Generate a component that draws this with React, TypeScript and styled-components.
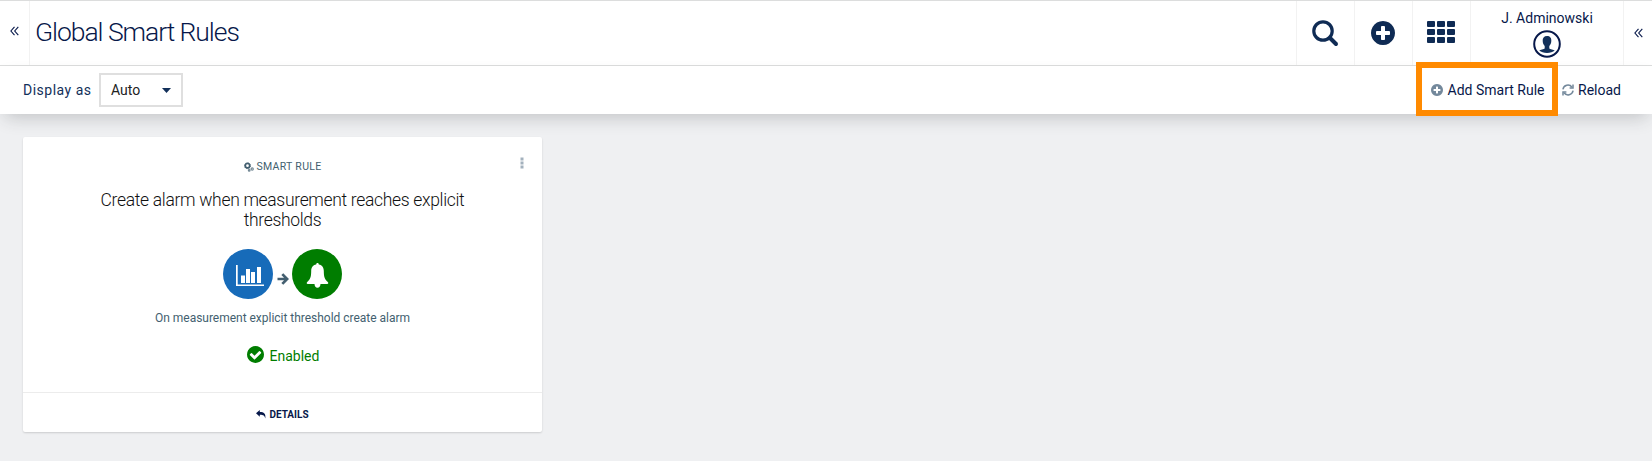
import React from 'react';
import styled, { createGlobalStyle } from 'styled-components';

const Global = createGlobalStyle`
  *{box-sizing:border-box}
  body{margin:0;background:#eff0f2;font-family:Roboto,"Liberation Sans",sans-serif;color:#07184a;font-size:14px}
  svg{display:block;flex:none}
`;
const Page = styled.div`height:461px;overflow:hidden;`;
const Header = styled.header`height:66px;display:flex;background:#fff;border-top:1px solid #dcdddd;border-bottom:1px solid #dcdddd;`;
const Toggle = styled.button<{ $side: 'left' | 'right' }>`
  width:${p => (p.$side === 'left' ? 30 : 29)}px;border:0;background:none;color:inherit;display:flex;align-items:center;justify-content:center;
  padding:${p => (p.$side === 'left' ? '0 0 4px 0' : '0')};
  ${p => (p.$side === 'left' ? 'border-right:1px solid #f2f2f2;' : 'border-left:1px solid #f2f2f2;')}
`;
const Title = styled.h1`margin:0 auto 0 5px;font-size:26.5px;font-weight:300;line-height:62px;letter-spacing:-1.05px;white-space:nowrap;`;
const Tool = styled.button<{ $bottom?: number }>`width:58px;padding:0 1px ${p => p.$bottom ?? 0}px 0;border:0;border-left:1px solid #f2f2f2;background:none;color:#0f2b54;display:flex;align-items:center;justify-content:center;`;
const User = styled.div`width:153px;border-left:1px solid #f2f2f2;display:flex;flex-direction:column;align-items:center;padding-top:8px;line-height:18px;font-size:14px;svg{margin-top:2.500px}`;
const Toolbar = styled.div`height:48px;background:#fff;display:flex;align-items:center;padding-left:23px;box-shadow:0 8px 18px -5px rgba(40,45,50,.24);`;
const Label = styled.label`font-size:14px;letter-spacing:.5px;color:#12305a;width:76px;white-space:nowrap;`;
const Select = styled.div`width:84px;height:34px;border:2px solid #dfdfdf;display:flex;align-items:center;justify-content:space-between;padding:0 10px 0 10px;color:#222;font-size:14px;`;
const Actions = styled.div`margin-left:auto;display:flex;align-items:center;`;
const Highlight = styled.div`width:142px;height:54px;margin-bottom:2px;border:6px solid #ff8a00;display:flex;align-items:center;justify-content:center;position:relative;padding:2px 0 0 1px;`;
const Action = styled.button`border:0;background:none;padding:0;color:#07184a;font:14px Roboto,sans-serif;display:flex;align-items:center;gap:5px;white-space:nowrap;svg{color:#73889b}`;
const Reload = styled(Action)`margin:0 31px 0 4px;gap:4px;`;
const Card = styled.article`margin:23px 0 0 23px;width:519px;height:295px;background:#fff;border-radius:2px;box-shadow:0 1px 2px rgba(0,0,0,.15);display:flex;flex-direction:column;align-items:center;position:relative;`;
const Kind = styled.div`margin-top:22px;height:14px;padding-top:1px;display:flex;align-items:center;gap:3px;color:#435f70;font-size:10.5px;letter-spacing:.3px;`;
const Menu = styled.button`position:absolute;right:17px;top:20px;width:5px;padding:0;border:0;background:none;color:#a3b1bd;`;
const Name = styled.h2`margin:17px 0 0;width:400px;text-align:center;font-size:17.5px;line-height:20px;font-weight:300;letter-spacing:-.32px;color:#111;`;
const Flow = styled.div`margin-top:19px;display:flex;align-items:center;gap:3.500px;color:#435f70;`;
const Step = styled.span`padding-top:10px;`;
const Circle = styled.div<{ $color: string; $left?: number }>`width:50px;height:50px;border-radius:50%;padding:3px 0 0 ${p => p.$left ?? 0}px;background:${p => p.$color};color:#fff;display:flex;align-items:center;justify-content:center;`;
const Description = styled.p`margin:11px 0 0;font-size:12px;line-height:16px;letter-spacing:-.02px;color:#435f70;`;
const Status = styled.div`margin-top:20px;height:20px;padding-left:1px;display:flex;align-items:center;gap:6px;color:#007d00;font-size:14px;svg{margin-bottom:4px}`;
const Details = styled.button`margin-top:auto;width:100%;height:40px;border:0;border-top:1px solid #ececec;background:none;display:flex;align-items:center;justify-content:center;gap:3px;color:#07184a;font:700 10px Roboto,sans-serif;padding:3px 0 0;`;

type IconProps = { size: number };
const disc = 'M1664 896q0 209-103 385.5t-279.5 279.5-385.5 103-385.5-103-279.5-279.5-103-385.5 103-385.5 279.5-279.5 385.5-103 385.5 103 279.5 279.5 103 385.5z';
const Chevrons = () => <svg width="9" height="10" viewBox="0 0 9 10" fill="none" stroke="currentColor" strokeWidth="1.1"><path d="M4.5.8.9 5l3.6 4.2M8.3.8 4.7 5l3.6 4.2" /></svg>;
const Search = () => <svg width="28" height="28" viewBox="0 0 28 28" fill="none" stroke="currentColor"><circle cx="12" cy="12" r="9.2" strokeWidth="3.2" /><path d="m19 19 6 6" strokeWidth="4" strokeLinecap="round" /></svg>;
const Plus = ({ size }: IconProps) => <svg width={size} height={size} viewBox="128 128 1536 1536" fill="currentColor"><path fillRule="evenodd" d={disc + 'M1344 960v-128q0-26-19-45t-45-19h-256v-256q0-26-19-45t-45-19h-128q-26 0-45 19t-19 45v256h-256q-26 0-45 19t-19 45v128q0 26 19 45t45 19h256v256q0 26 19 45t45 19h128q26 0 45-19t19-45v-256h256q26 0 45-19t19-45z'} /></svg>;
const Check = () => <svg width="17" height="17" viewBox="128 128 1536 1536" fill="currentColor"><path fillRule="evenodd" d={disc + 'M1412 734q0-28-18-46l-91-90q-19-19-45-19t-45 19l-408 407-226-226q-19-19-45-19t-45 19l-91 90q-18 18-18 46 0 27 18 45l362 362q19 19 45 19 27 0 46-19l543-543q18-18 18-45z'} /></svg>;
const Grid = () => <svg width="28" height="22" viewBox="0 0 28 22" fill="currentColor">{[0, 8, 16].map(y => [0, 10, 20].map(x => <rect key={`${x}-${y}`} x={x} y={y} width="8" height="6" rx="1" />))}</svg>;
const Avatar = () => <svg width="28" height="28" viewBox="0 0 28 28"><circle cx="14" cy="14" r="12.8" fill="none" stroke="#07184a" strokeWidth="2" /><path fill="#12305a" d="M14 6c-3 0-4.6 2-4.3 5 .1 2.5 1 3.9 2 5v2.2c-.4 1.2-4.700 1.2-5.400 2.3 1.800 1.700 4.500 2.400 7.700 2.400s5.900-.7 7.700-2.400c-.7-1.100-5-1.100-5.400-2.300V16c1-1.100 1.900-2.500 2-5C18.600 8 17 6 14 6Z" /></svg>;
const Refresh = () => <svg width="12" height="12" viewBox="0 0 12 12" fill="none" stroke="currentColor" strokeWidth="1.5"><path d="M.9 5.300A5.100 5.100 0 0 1 10 3.200M11.100 6.700A5.100 5.100 0 0 1 2 8.800" /><path d="M11 .6V4H7.600M1 11.400V8h3.400" /></svg>;
const Gears = () => <svg width="10" height="10" viewBox="0 0 10 10" fill="none" stroke="currentColor"><circle cx="3.500" cy="3.700" r="2.200" strokeWidth="1.700" /><circle cx="3.500" cy="3.700" r="3" strokeWidth="1" strokeDasharray="1.200 1.100" /><circle cx="8.200" cy="7" r="1.100" strokeWidth="1.200" opacity=".75" /><circle cx="5.200" cy="8.400" r=".8" strokeWidth="1.200" opacity=".75" /></svg>;
const Chart = () => <svg width="28" height="22" viewBox="0 0 28 22" fill="currentColor"><path d="M0 0h1.700v19.500H28V21H0zM5 10.500h4V18H5zM10 4h4v14h-4zM15 7h4v11h-4zM21 2h4v16h-4z" /></svg>;
const Bell = () => <svg width="23" height="25" viewBox="0 0 23 25" fill="currentColor"><path d="M11.500 0c.9 0 1.300.6 1.300 1.600 3.600.7 5 3.200 5 6.500 0 6 1 8.500 4 11 .9.900.6 1.900-.6 1.900H1.800c-1.200 0-1.500-1-.6-1.900 3-2.500 4-5 4-11 0-3.300 1.400-5.800 5-6.500 0-1 .4-1.600 1.300-1.600ZM8.500 21h6c-.2 2.500-1.200 3.700-3 3.700s-2.800-1.200-3-3.700Z" /></svg>;
const Arrow = () => <svg width="12" height="12" viewBox="0 0 12 12" fill="none" stroke="currentColor" strokeWidth="2.700"><path d="M.5 6h9.500M5.300 1.100l4.900 4.900-4.900 4.900" /></svg>;
const Reply = () => <svg width="10" height="9" viewBox="0 0 10 9" fill="currentColor"><path d="M0 3.300 3.800 0v2C8 2 10 3.700 9.300 8.600 8.800 5.700 7.500 4.700 3.800 4.700v2Z" /></svg>;

export default function App() {
  return <Page><Global />
    <Header>
      <Toggle $side="left" aria-label="Navigator"><Chevrons /></Toggle>
      <Title>Global Smart Rules</Title>
      <Tool aria-label="Search"><Search /></Tool><Tool aria-label="Add"><Plus size={24} /></Tool><Tool $bottom={2} aria-label="Apps"><Grid /></Tool>
      <User>J. Adminowski<Avatar /></User>
      <Toggle $side="right" aria-label="Drawer"><Chevrons /></Toggle>
    </Header>
    <Toolbar>
      <Label>Display as</Label>
      <Select>Auto<svg width="9" height="5" viewBox="0 0 9 5"><path fill="#12305a" d="M0 0h9L4.500 5z" /></svg></Select>
      <Actions><Highlight><Action><Plus size={12} />Add Smart Rule</Action></Highlight><Reload><Refresh />Reload</Reload></Actions>
    </Toolbar>
    <Card>
      <Menu aria-label="More"><svg width="4" height="12" viewBox="0 0 4 12" fill="currentColor"><path d="M.5.500h3v3h-3zM.5 4.500h3v3h-3zM.5 8.500h3v3h-3z" /></svg></Menu>
      <Kind><Gears />SMART RULE</Kind>
      <Name>Create alarm when measurement reaches explicit thresholds</Name>
      <Flow><Circle $color="#176bb9" $left={4}><Chart /></Circle><Step><Arrow /></Step><Circle $color="#007d00"><Bell /></Circle></Flow>
      <Description>On measurement explicit threshold create alarm</Description>
      <Status><Check />Enabled</Status>
      <Details><Reply />DETAILS</Details>
    </Card>
  </Page>;
}
